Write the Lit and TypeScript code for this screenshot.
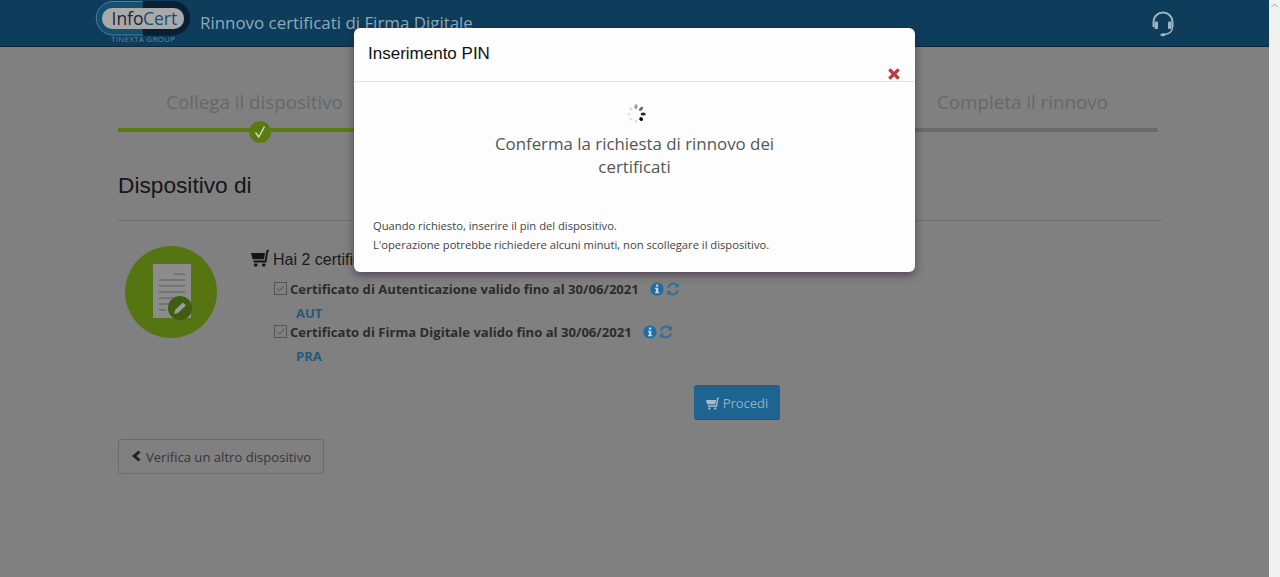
import { LitElement, html, svg, css } from "lit";
import { customElement } from "lit/decorators.js";

const sans = css`"Open Sans", "Noto Sans", sans-serif`;
const arial = css`"Liberation Sans", Arial, sans-serif`;

const cart = html`<svg class="cart" viewBox="0 0 18 18"><path d="M17.600 0.400 L15.400 1.400 L13.800 11.400 L2.600 11.400 L2.600 13.400 L15.400 13.400 L17 3 L18 2.400 Z" fill="currentColor"/><path d="M0 4 H14 L12.900 10.200 H1.600 Z" fill="currentColor"/><rect x="3" y="14.600" width="3.400" height="2.800" rx="1" fill="currentColor"/><rect x="11" y="14.600" width="3.400" height="2.800" rx="1" fill="currentColor"/></svg>`;

const info = html`<svg class="ico" viewBox="0 0 14 14"><circle cx="7" cy="7" r="6.600" fill="#1d6ea6"/><rect x="5.900" y="2.500" width="2.400" height="2.100" fill="#c8d4dc"/><path d="M5 5.800 H8.300 V10 H9.200 V11.300 H5 V10 H5.900 V7.100 H5 Z" fill="#c8d4dc"/></svg>`;
const refresh = html`<svg class="ico" viewBox="0 0 14 14"><path d="M2.100 5.600 A5.200 5.200 0 0 1 11 3.200" fill="none" stroke="#2a6f9e" stroke-width="1.900"/><path d="M13 0.800 V5.200 H8.600 Z" fill="#2a6f9e"/><path d="M11.900 8.400 A5.200 5.200 0 0 1 3 10.800" fill="none" stroke="#2a6f9e" stroke-width="1.900"/><path d="M1 13.200 V8.800 H5.400 Z" fill="#2a6f9e"/></svg>`;

@customElement("app-root")
export class AppRoot extends LitElement {
  static styles = css`
    :host { display: block; position: relative; width: 1280px; height: 577px; overflow: hidden; font-family: ${sans}; background: #808080; }
    .frame { display: flex; height: 577px; }
    .page { flex: 1; min-width: 0; display: flex; flex-direction: column; }
    .scrollbar { width: 11px; background: #f1f1f1; display: flex; justify-content: center; padding-top: 3px; box-sizing: border-box; }
    .scrollbar svg { width: 7px; height: 5px; }
    header { height: 47px; box-sizing: border-box; background: #0d3d5a; border-bottom: 1px solid #0a2a3e; display: flex; align-items: flex-start; padding-left: 95px; }
    .logo { width: 96px; height: 46px; flex: none; }
    .logo text { font-family: ${sans}; }
    .app-title { margin-left: 9px; margin-top: 11px; font-size: 16.900px; line-height: 24px; color: #8eaabb; white-space: nowrap; }
    .head-spacer { flex: 1; }
    .headset { width: 26px; height: 28px; margin: 10px 93px 0 0; flex: none; }

    main { padding: 0 107px 0 118px; display: flex; flex-direction: column; align-items: flex-start; }
    .stepper { position: relative; width: 1040px; margin-top: 42px; }
    .labels { display: grid; grid-template-columns: 273px 1fr 271px; height: 27px; font-size: 18.800px; line-height: 27px; color: #686868; text-align: center; }
    .track { display: flex; height: 4px; margin-top: 12px; }
    .track .done { width: 300px; background: #5c7a12; }
    .track .todo { flex: 1; background: #6a6a6a; }
    .check { position: absolute; left: 131px; top: 32px; width: 22px; height: 22px; border-radius: 50%; background: #5c7a12; display: flex; align-items: center; justify-content: center; }
    .check svg { width: 16px; height: 16px; }
    h1 { margin: 38px 0 0; font: 400 22.700px/30px ${arial}; color: #161616; }
    hr { align-self: stretch; width: 1044px; margin: 20px 0 0; border: 0; border-top: 1px solid #6f6f6f; }
    .device { display: flex; margin-top: 25px; }
    .badge { width: 92px; height: 92px; margin-left: 7px; border-radius: 50%; background: #557512; flex: none; }
    .badge svg { display: block; width: 92px; height: 92px; }
    .details { margin-left: 34px; width: 600px; }
    .summary { display: flex; align-items: center; gap: 4px; height: 24px; margin: 2px 0 6px; font: 400 16px/24px ${arial}; color: #1a1a1a; white-space: nowrap; }
    .cart { width: 18px; height: 18px; color: #141414; flex: none; margin-top: -4px; }
    .cert { margin-left: 23px; }
    .cert-row { display: flex; align-items: center; height: 22px; font-size: 13.100px; font-weight: 700; color: #2c2c2c; white-space: nowrap; }
    .box { width: 11px; height: 11px; border: 1px solid #555; margin-right: 3px; margin-top: -2px; display: flex; flex: none; }
    .box svg { width: 11px; height: 11px; }
    .ico { width: 14px; height: 14px; flex: none; margin-top: -1px; }
    .ico.first { margin-left: 11px; margin-right: 2px; }
    .code { height: 16px; line-height: 16px; margin-top: 5px; padding-left: 22px; font-size: 13px; font-weight: 700; color: #28587c; }
    .go { margin-top: 21px; margin-left: 443px; width: 86px; height: 35px; box-sizing: border-box; border-radius: 3px; background: #1d6590; border-top: 2px solid #2a5e80; border-bottom: 1px solid #1a5a82; color: #8fb0c4; font-size: 13px; display: flex; align-items: center; justify-content: center; gap: 4px; }
    .go .cart { width: 13px; height: 13px; color: #a8bcc8; margin-top: 0; }
    .back { margin-top: 19px; width: 206px; height: 35px; box-sizing: border-box; border: 1px solid #6b6b6b; border-radius: 3px; display: flex; align-items: center; justify-content: center; gap: 5px; font-size: 13.100px; color: #363636; }
    .back svg { width: 10px; height: 12px; margin-top: -1px; }

    .modal { position: absolute; left: 354px; top: 28px; width: 561px; height: 244px; box-sizing: border-box; background: #fdfdfd; border-radius: 6px; box-shadow: 0 3px 9px rgba(40,20,50,.55); display: flex; flex-direction: column; }
    .modal-head { position: relative; height: 54px; box-sizing: border-box; border-bottom: 1px solid #e3e3e3; padding: 15px 14px 0; font: 400 17px/22px ${arial}; color: #111; }
    .close { position: absolute; right: 14px; top: 39px; width: 14px; height: 14px; }
    .modal-body { flex: 1; display: flex; flex-direction: column; align-items: center; }
    .spinner { width: 24px; height: 24px; margin-top: 20px; margin-left: 3px; flex: none; }
    .confirm { margin-top: 6px; width: 300px; text-align: center; font-size: 16.850px; line-height: 23px; color: #555; }
    .notes { align-self: stretch; margin-top: 38px; padding-left: 19px; font-size: 11.200px; line-height: 19px; color: #444; white-space: nowrap; }
  `;

  private spinner() {
    const dots = [
      [0, "#9a9a9a", 3.4, 2.4], [45, "#6a6a6a", 3.6, 2.4], [90, "#2a2a2a", 3.6, 2.4], [135, "#000", 2.8, 2.8],
      [180, "#ddd", 2.2, 2.2], [225, "#e2e2e2", 2.2, 2.2], [270, "#e6e6e6", 2.2, 2.2], [315, "#dcdcdc", 2.4, 2.2],
    ] as const;
    return html`<svg class="spinner" viewBox="0 0 24 24">
      ${dots.map(([a, c, l, w]) => svg`<ellipse cx="12" cy="4.800" rx=${w / 1.6} ry=${l / 1.4} fill=${c} transform="rotate(${a} 12 12)"/>`)}
    </svg>`;
  }

  private cert(label: string, code: string) {
    return html`<div class="cert">
      <div class="cert-row">
        <span class="box"><svg viewBox="0 0 12 12"><path d="M2.500 6 L5 8.500 L10 3" fill="none" stroke="#4a4a4a" stroke-width="1"/></svg></span>
        ${label}
        <span class="ico first">${info}</span>
        <span class="ico">${refresh}</span>
      </div>
      <div class="code">${code}</div>
    </div>`;
  }

  render() {
    return html`
      <div class="frame">
        <div class="page">
          <header>
            <svg class="logo" viewBox="0 0 96 46">
              <path d="M18 1.500 H48 V35 H18 A16.750 16.750 0 0 1 18 1.500 Z" fill="#12506f" stroke="#4d7f9a" stroke-width="1"/>
              <path d="M48 1.500 H78 A16.750 16.750 0 0 1 78 35 H48 Z" fill="#0a1f33" stroke="#0a1f33" stroke-width="1"/>
              <rect x="7" y="8" width="82" height="21" rx="10" fill="#a9a9a9"/>
              <text x="16.500" y="24.500" font-size="17.500" fill="#1c2430">Info</text>
              <text x="48" y="24.500" font-size="17.500" fill="#15506f">Cert</text>
              <text x="16" y="42" font-size="8" fill="#5e8aa3" textLength="64">TINEXTA GROUP</text>
            </svg>
            <div class="app-title">Rinnovo certificati di Firma Digitale</div>
            <div class="head-spacer"></div>
            <svg class="headset" viewBox="0 0 26 28" fill="none">
              <path d="M3.500 17 V12 A9.500 9.500 0 0 1 22.500 12 V17" stroke="#9fb4c1" stroke-width="2"/>
              <rect x="4.500" y="11.500" width="3.500" height="7.500" rx="1" fill="#9fb4c1"/>
              <rect x="18" y="11.500" width="3.500" height="7.500" rx="1" fill="#9fb4c1"/>
              <path d="M22.500 17 C22.500 22 19 24 14 24.500" stroke="#9fb4c1" stroke-width="1.500"/>
              <ellipse cx="13" cy="24.700" rx="2.700" ry="1.500" fill="#9fb4c1"/>
            </svg>
          </header>
          <main>
            <div class="stepper">
              <div class="labels"><span>Collega il dispositivo</span><span></span><span>Completa il rinnovo</span></div>
              <div class="track"><div class="done"></div><div class="todo"></div></div>
              <div class="check"><svg viewBox="0 0 16 16"><path d="M3.500 8.500 L6.800 13 L12.500 2.500" fill="none" stroke="#d5dcc0" stroke-width="1.400"/></svg></div>
            </div>
            <h1>Dispositivo di</h1>
            <hr />
            <div class="device">
              <div class="badge">
                <svg viewBox="0 0 92 92">
                  <rect x="28" y="18" width="38" height="54" fill="#8c8c8c"/>
                  <g stroke="#6c6c6c" stroke-width="1.500">
                    <path d="M49 28 H60 M34 34 H60 M34 40 H60 M34 46 H60 M34 52 H60 M34 58 H45 M34 64 H41"/>
                  </g>
                  <circle cx="55" cy="62" r="12" fill="#3f5e10"/>
                  <path d="M49 68 L50 64 L58 56.500 L61 59.500 L53 67 Z" fill="#9a9a9a"/>
                </svg>
              </div>
              <div class="details">
                <div class="summary">${cart}<span>Hai 2 certificati</span></div>
                ${this.cert("Certificato di Autenticazione valido fino al 30/06/2021", "AUT")}
                ${this.cert("Certificato di Firma Digitale valido fino al 30/06/2021", "PRA")}
                <div class="go">${cart}<span>Procedi</span></div>
              </div>
            </div>
            <div class="back">
              <svg viewBox="0 0 10 12"><path d="M7.500 0.500 L9.500 2.500 L5.500 6 L9.500 9.500 L7.500 11.500 L1 6 Z" fill="#222"/></svg>
              <span>Verifica un altro dispositivo</span>
            </div>
          </main>
        </div>
        <div class="scrollbar"><svg viewBox="0 0 7 5"><path d="M0.500 4 L3.500 1 L6.500 4" fill="none" stroke="#a0a0a0" stroke-width="1"/></svg></div>
      </div>
      <div class="modal">
        <div class="modal-head">
          Inserimento PIN
          <svg class="close" viewBox="0 0 12 12"><path d="M3 1 L6 4 L9 1 L11 3 L8 6 L11 9 L9 11 L6 8 L3 11 L1 9 L4 6 L1 3 Z" fill="#c0383c"/></svg>
        </div>
        <div class="modal-body">
          ${this.spinner()}
          <div class="confirm">Conferma la richiesta di rinnovo dei certificati</div>
          <div class="notes">Quando richiesto, inserire il pin del dispositivo.<br />L'operazione potrebbe richiedere alcuni minuti, non scollegare il dispositivo.</div>
        </div>
      </div>
    `;
  }
}
